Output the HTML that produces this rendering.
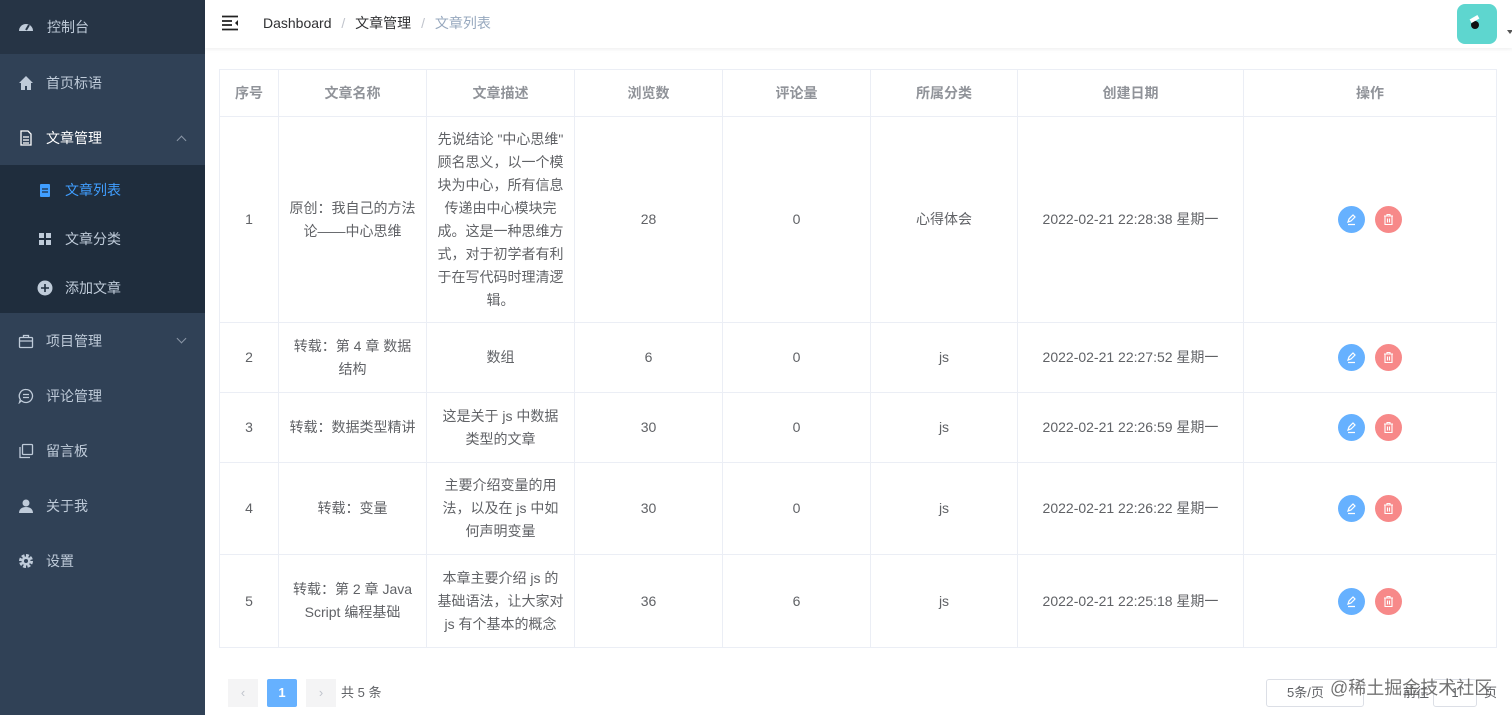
<!DOCTYPE html>
<html><head><meta charset="utf-8"><style>
*{margin:0;padding:0;box-sizing:border-box}
body{width:1512px;height:715px;overflow:hidden;font-family:"Liberation Sans","Noto Sans CJK SC",sans-serif;background:#fff;position:relative}
.side{position:absolute;left:0;top:0;width:205px;height:715px;background:#304156}
.it{position:absolute;left:0;width:205px;height:55px;color:#bfcbd9;font-size:14px;display:flex;align-items:center}
.it .ic{position:absolute;left:18px;top:50%;transform:translateY(-50%);width:16px;height:16px}
.it span.t{position:absolute;left:46px}
.sub{background:#1f2d3d;height:49px}
.sub .ic{left:37px}
.sub span.t{left:65px}
.arr{position:absolute;right:20px;top:50%;width:7px;height:7px;border-left:1px solid #8a96a6;border-top:1px solid #8a96a6}
.hdr{position:absolute;left:205px;top:0;right:0;height:48px;background:#fff;box-shadow:0 1px 4px rgba(0,21,41,.08)}
table{position:absolute;left:219px;top:69px;width:1278px;border-collapse:collapse;font-size:14px;color:#606266;table-layout:fixed}
td,th{border:1px solid #ebeef5;text-align:center;padding:0 10px;line-height:23px;word-break:break-all}
th{color:#909399;font-weight:bold;height:47px}
.btn{display:inline-block;width:27px;height:27px;border-radius:50%;vertical-align:middle;margin:0 5px;position:relative}
.btn svg{position:absolute;left:7px;top:7px}
.b1{background:#66b1ff}.b2{background:#f78989}
.pg{position:absolute;top:679px;height:28px;font-size:13px;color:#606266;line-height:28px;text-align:center}
</style></head><body>
<div class="side">
 <div class="it" style="top:0;height:54px;background:#263445"><svg class="ic" viewBox="0 0 16 16"><path d="M1 12a7 7 0 0 1 14 0z" fill="#bfcbd9"/><path d="M8 11l3-5" stroke="#263445" stroke-width="2"/></svg><span class="t" style="left:47px">控制台</span></div>
 <div class="it" style="top:55px"><svg class="ic" viewBox="0 0 16 16"><path d="M8 1l7 7h-2v7h-4v-4H7v4H3V8H1z" fill="#bfcbd9"/></svg><span class="t">首页标语</span></div>
 <div class="it" style="top:110px;color:#fff"><svg class="ic" viewBox="0 0 16 16"><path d="M3 1h7l3 3v11H3z M5 7h6M5 10h6M5 13h6" stroke="#fff" fill="none" stroke-width="1.3"/></svg><span class="t">文章管理</span><div class="arr" style="transform:rotate(45deg);margin-top:-1px"></div></div>
 <div class="it sub" style="top:165px;color:#409eff"><svg class="ic" viewBox="0 0 16 16"><rect x="3" y="2" width="10" height="13" rx="1" fill="#409eff"/><path d="M5 7h6M5 10h6" stroke="#1f2d3d" stroke-width="1.3"/></svg><span class="t">文章列表</span></div>
 <div class="it sub" style="top:214px"><svg class="ic" viewBox="0 0 16 16" fill="#bfcbd9"><rect x="2" y="2" width="5" height="5"/><rect x="9" y="2" width="5" height="5"/><rect x="2" y="9" width="5" height="5"/><rect x="9" y="9" width="5" height="5"/></svg><span class="t">文章分类</span></div>
 <div class="it sub" style="top:263px;height:50px"><svg class="ic" viewBox="0 0 16 16"><circle cx="8" cy="8" r="7.5" fill="#bfcbd9"/><path d="M8 4v8M4 8h8" stroke="#1f2d3d" stroke-width="1.6"/></svg><span class="t">添加文章</span></div>
 <div class="it" style="top:313px"><svg class="ic" viewBox="0 0 16 16"><rect x="1.5" y="4.5" width="13" height="10" rx="1" stroke="#bfcbd9" fill="none" stroke-width="1.3"/><path d="M5.5 4.5V2.5h5v2M1.5 8h13" stroke="#bfcbd9" fill="none" stroke-width="1.3"/></svg><span class="t">项目管理</span><div class="arr" style="transform:rotate(225deg);margin-top:-6px"></div></div>
 <div class="it" style="top:368px"><svg class="ic" viewBox="0 0 16 16"><path d="M8 1.5a6.5 6.5 0 1 1-4.5 11.2L1.5 14.5l.8-3A6.5 6.5 0 0 1 8 1.5z M5 6.5h6M5 9.5h6" stroke="#bfcbd9" fill="none" stroke-width="1.3"/></svg><span class="t">评论管理</span></div>
 <div class="it" style="top:423px"><svg class="ic" viewBox="0 0 16 16"><rect x="4.5" y="1.5" width="10" height="10" rx="1" stroke="#bfcbd9" fill="none" stroke-width="1.3"/><path d="M2 4v10.5h10" stroke="#bfcbd9" fill="none" stroke-width="1.3"/></svg><span class="t">留言板</span></div>
 <div class="it" style="top:478px"><svg class="ic" viewBox="0 0 16 16" fill="#bfcbd9"><circle cx="8" cy="5" r="3.5"/><path d="M1 15c0-4 3-6 7-6s7 2 7 6z"/></svg><span class="t">关于我</span></div>
 <div class="it" style="top:533px"><svg class="ic" viewBox="0 0 16 16"><circle cx="8" cy="8" r="5" stroke="#bfcbd9" stroke-width="4" stroke-dasharray="2.6 1.3" fill="none"/><circle cx="8" cy="8" r="4.5" fill="#bfcbd9"/><circle cx="8" cy="8" r="2" fill="#304156"/></svg><span class="t">设置</span></div>
</div>
<div class="hdr">
 <svg style="position:absolute;left:17px;top:15px" width="18" height="16" viewBox="0 0 18 16"><path d="M0 1.5h16M0 6h10M0 10h10M0 14.5h16" stroke="#222" stroke-width="1.8"/><path d="M16 5l-3 3 3 3z" fill="#222"/></svg>
 <div style="position:absolute;left:58px;top:13px;font-size:14px;color:#303133">Dashboard <span style="color:#c0c4cc;margin:0 6px">/</span> 文章管理 <span style="color:#c0c4cc;margin:0 6px">/</span> <span style="color:#97a8be">文章列表</span></div>
 <div style="position:absolute;left:1252px;top:4px;width:40px;height:40px;border-radius:8px;background:#5ed6cf"><div style="position:absolute;left:14px;top:17px;width:8px;height:8px;border-radius:50%;background:#111"></div><div style="position:absolute;left:13px;top:13px;width:9px;height:4px;background:#fff;transform:rotate(-30deg)"></div></div>
 <div style="position:absolute;left:1302px;top:30px;border:3px solid transparent;border-top:4px solid #555"></div>
</div>
<table>
<colgroup><col style="width:59px"><col style="width:148px"><col style="width:148px"><col style="width:148px"><col style="width:148px"><col style="width:147px"><col style="width:226px"><col></colgroup>
<tr><th>序号</th><th>文章名称</th><th>文章描述</th><th>浏览数</th><th>评论量</th><th>所属分类</th><th>创建日期</th><th>操作</th></tr>
<tr style="height:206px"><td>1</td><td>原创：我自己的方法论——中心思维</td><td>先说结论 "中心思维" 顾名思义，以一个模块为中心，所有信息传递由中心模块完成。这是一种思维方式，对于初学者有利于在写代码时理清逻辑。</td><td>28</td><td>0</td><td>心得体会</td><td>2022-02-21 22:28:38 星期一</td><td><span class="btn b1"><svg width="13" height="13" viewBox="0 0 13 13"><path d="M3 9l1-3 4-4 2 2-4 4zM3 11.5h7" stroke="#fff" fill="none" stroke-width="1.2"/></svg></span><span class="btn b2"><svg width="13" height="13" viewBox="0 0 13 13"><path d="M2 3h9M5 3V1.5h3V3M3 3.5v8h7v-8M5.5 5.5v4M7.5 5.5v4" stroke="#fff" fill="none" stroke-width="1.1"/></svg></span></td></tr>
<tr style="height:70px"><td>2</td><td>转载：第 4 章 数据结构</td><td>数组</td><td>6</td><td>0</td><td>js</td><td>2022-02-21 22:27:52 星期一</td><td><span class="btn b1"><svg width="13" height="13" viewBox="0 0 13 13"><path d="M3 9l1-3 4-4 2 2-4 4zM3 11.5h7" stroke="#fff" fill="none" stroke-width="1.2"/></svg></span><span class="btn b2"><svg width="13" height="13" viewBox="0 0 13 13"><path d="M2 3h9M5 3V1.5h3V3M3 3.5v8h7v-8M5.5 5.5v4M7.5 5.5v4" stroke="#fff" fill="none" stroke-width="1.1"/></svg></span></td></tr>
<tr style="height:70px"><td>3</td><td>转载：数据类型精讲</td><td>这是关于 js 中数据类型的文章</td><td>30</td><td>0</td><td>js</td><td>2022-02-21 22:26:59 星期一</td><td><span class="btn b1"><svg width="13" height="13" viewBox="0 0 13 13"><path d="M3 9l1-3 4-4 2 2-4 4zM3 11.5h7" stroke="#fff" fill="none" stroke-width="1.2"/></svg></span><span class="btn b2"><svg width="13" height="13" viewBox="0 0 13 13"><path d="M2 3h9M5 3V1.5h3V3M3 3.5v8h7v-8M5.5 5.5v4M7.5 5.5v4" stroke="#fff" fill="none" stroke-width="1.1"/></svg></span></td></tr>
<tr style="height:92px"><td>4</td><td>转载：变量</td><td>主要介绍变量的用法，以及在 js 中如何声明变量</td><td>30</td><td>0</td><td>js</td><td>2022-02-21 22:26:22 星期一</td><td><span class="btn b1"><svg width="13" height="13" viewBox="0 0 13 13"><path d="M3 9l1-3 4-4 2 2-4 4zM3 11.5h7" stroke="#fff" fill="none" stroke-width="1.2"/></svg></span><span class="btn b2"><svg width="13" height="13" viewBox="0 0 13 13"><path d="M2 3h9M5 3V1.5h3V3M3 3.5v8h7v-8M5.5 5.5v4M7.5 5.5v4" stroke="#fff" fill="none" stroke-width="1.1"/></svg></span></td></tr>
<tr style="height:93px"><td>5</td><td>转载：第 2 章 JavaScript 编程基础</td><td>本章主要介绍 js 的基础语法，让大家对 js 有个基本的概念</td><td>36</td><td>6</td><td>js</td><td>2022-02-21 22:25:18 星期一</td><td><span class="btn b1"><svg width="13" height="13" viewBox="0 0 13 13"><path d="M3 9l1-3 4-4 2 2-4 4zM3 11.5h7" stroke="#fff" fill="none" stroke-width="1.2"/></svg></span><span class="btn b2"><svg width="13" height="13" viewBox="0 0 13 13"><path d="M2 3h9M5 3V1.5h3V3M3 3.5v8h7v-8M5.5 5.5v4M7.5 5.5v4" stroke="#fff" fill="none" stroke-width="1.1"/></svg></span></td></tr>
</table>
<div class="pg" style="left:228px;width:30px;background:#f4f4f5;color:#c0c4cc">‹</div>
<div class="pg" style="left:267px;width:30px;background:#66b1ff;color:#fff;font-weight:bold;border-radius:2px">1</div>
<div class="pg" style="left:306px;width:30px;background:#f4f4f5;color:#c0c4cc">›</div>
<div class="pg" style="left:341px">共 5 条</div>
<div class="pg" style="left:1266px;width:98px;border:1px solid #dcdfe6;border-radius:3px;color:#606266;text-align:left;padding-left:20px;line-height:26px">5条/页</div>
<div class="pg" style="left:1403px">前往</div>
<div class="pg" style="left:1433px;width:44px;border:1px solid #dcdfe6;border-radius:3px;line-height:26px">1</div>
<div class="pg" style="left:1484px">页</div>
<div style="position:absolute;left:1330px;top:674px;font-size:18px;color:rgba(90,90,90,.85)">@稀土掘金技术社区</div>
</body></html>
